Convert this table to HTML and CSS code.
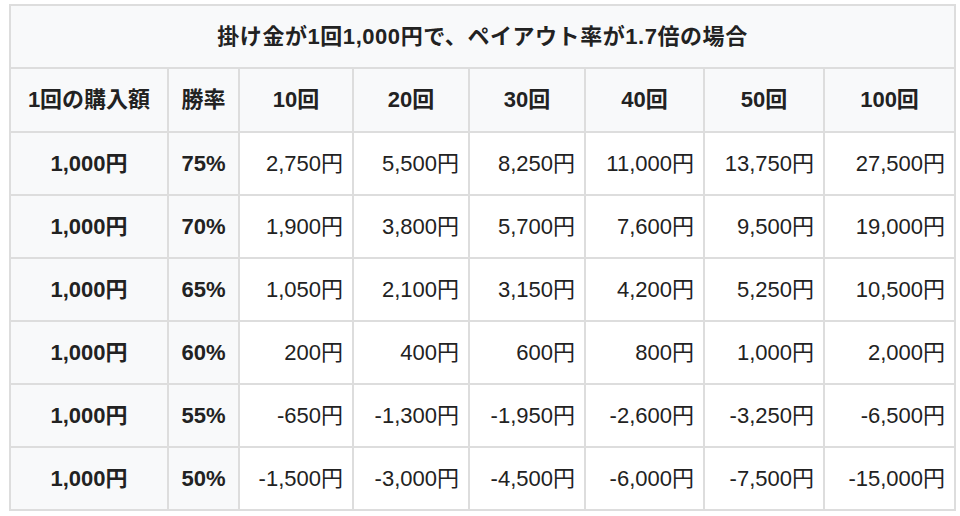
FILE: index.html
```html
<!DOCTYPE html>
<html lang="ja">
<head>
<meta charset="utf-8">
<link rel="stylesheet" href="styles.css">
</head>
<body>
<table class="payout">
  <colgroup>
    <col class="c-amount">
    <col class="c-rate">
    <col class="c-10">
    <col class="c-20">
    <col class="c-30">
    <col class="c-40">
    <col class="c-50">
    <col class="c-100">
  </colgroup>
  <thead>
    <tr class="title-row"><th colspan="8">掛け金が1回1,000円で、ペイアウト率が1.7倍の場合</th></tr>
    <tr class="head-row">
      <th>1回の購入額</th><th>勝率</th><th>10回</th><th>20回</th><th>30回</th><th>40回</th><th>50回</th><th>100回</th>
    </tr>
  </thead>
  <tbody>
    <tr><th>1,000円</th><th>75%</th><td>2,750円</td><td>5,500円</td><td>8,250円</td><td>11,000円</td><td>13,750円</td><td>27,500円</td></tr>
    <tr><th>1,000円</th><th>70%</th><td>1,900円</td><td>3,800円</td><td>5,700円</td><td>7,600円</td><td>9,500円</td><td>19,000円</td></tr>
    <tr><th>1,000円</th><th>65%</th><td>1,050円</td><td>2,100円</td><td>3,150円</td><td>4,200円</td><td>5,250円</td><td>10,500円</td></tr>
    <tr><th>1,000円</th><th>60%</th><td>200円</td><td>400円</td><td>600円</td><td>800円</td><td>1,000円</td><td>2,000円</td></tr>
    <tr><th>1,000円</th><th>55%</th><td>-650円</td><td>-1,300円</td><td>-1,950円</td><td>-2,600円</td><td>-3,250円</td><td>-6,500円</td></tr>
    <tr><th>1,000円</th><th>50%</th><td>-1,500円</td><td>-3,000円</td><td>-4,500円</td><td>-6,000円</td><td>-7,500円</td><td>-15,000円</td></tr>
  </tbody>
</table>
</body>
</html>
```

FILE: styles.css
```css
html, body {
  margin: 0;
  padding: 0;
  background: #fff;
}
body {
  padding: 4px 0 0 9px;
  font-family: "Liberation Sans", "Noto Sans CJK JP", sans-serif;
  font-size: 22px;
  line-height: 30px;
  color: #222;
}
.payout {
  border-collapse: collapse;
  table-layout: fixed;
  width: 945px;
  border: 2px solid #dddddd;
}
.payout th,
.payout td {
  border: 2px solid #dddddd;
  padding: 0 9px 0 4px;
  vertical-align: middle;
  white-space: nowrap;
}
.payout th {
  background: #f8f9fa;
  font-weight: bold;
  text-align: center;
  padding: 0 4px;
}
.payout td {
  background: #fff;
  text-align: right;
  font-weight: normal;
}
.title-row th {
  letter-spacing: 0.55px;
}
.c-amount { width: 158px; }
.c-rate { width: 71px; }
.c-10 { width: 114px; }
.c-20 { width: 116px; }
.c-30 { width: 116px; }
.c-40 { width: 119px; }
.c-50 { width: 120px; }
.c-100 { width: 131px; }
.title-row { height: 63px; }
.head-row { height: 64px; }
tbody tr { height: 63px; }
```
